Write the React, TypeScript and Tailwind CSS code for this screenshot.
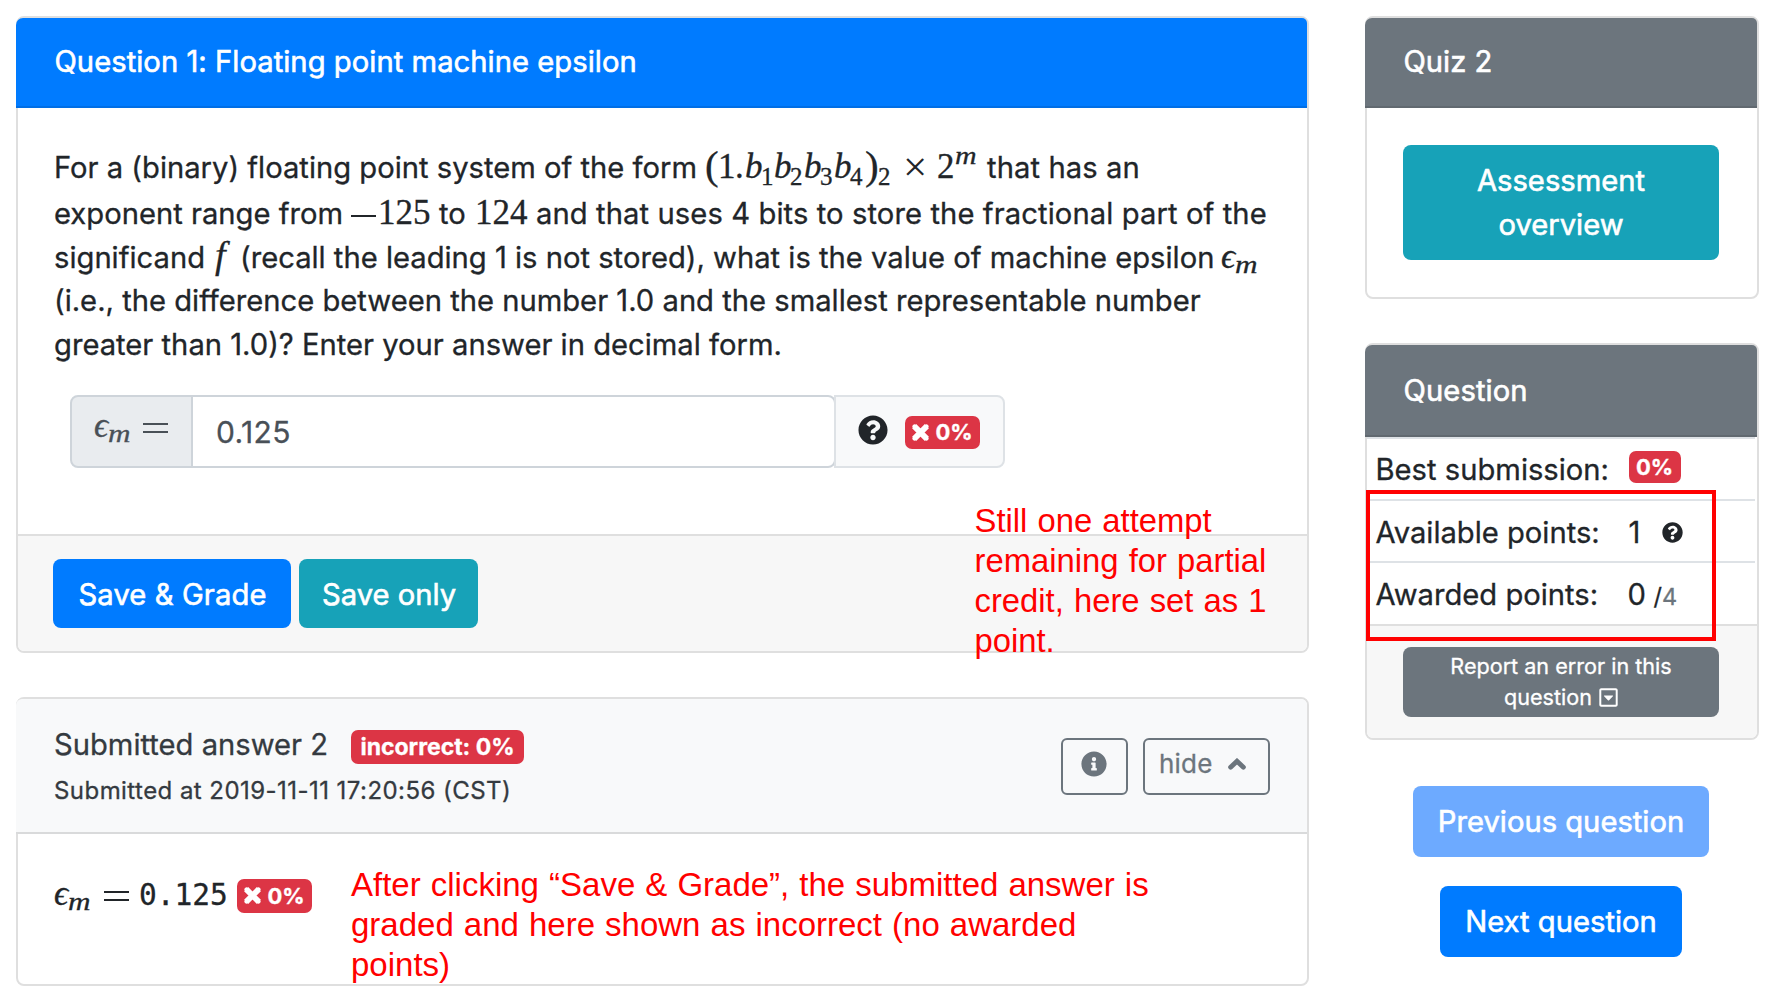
import type { ReactNode } from "react";
import { FaInfoCircle, FaQuestionCircle, FaRegCaretSquareDown } from "react-icons/fa";

const serif = "font-['Liberation_Serif',serif] leading-none";
const it = `${serif} italic text-[35px]`;
const num = `${serif} text-[35px]`;
const sub = `${serif} text-[25px] relative top-[6.5px]`;
const bold = "[-webkit-text-stroke:0.6px]";

function Cross() {
  return (
    <svg viewBox="0 0 16 16" className="h-[17px] w-[17px]" fill="none" stroke="currentColor">
      <path d="M2 2 14 14 M14 2 2 14" strokeWidth="5.4" />
      <path d="M2.4 2.4 13.6 13.6 M13.6 2.4 2.4 13.6" strokeWidth="4" strokeLinecap="round" />
    </svg>
  );
}

function ChevronUp() {
  return (
    <svg viewBox="0 0 18 12" className="ml-[15px] h-[12px] w-[18px]" fill="none" stroke="currentColor">
      <path d="M2.6 9.2 9 3.2 15.4 9.2" strokeWidth="4.8" strokeLinecap="round" />
    </svg>
  );
}

function Badge({ className, children }: { className: string; children: ReactNode }) {
  return (
    <span
      className={`inline-flex shrink-0 items-center justify-center rounded-[7px] bg-[#dc3545] text-[22px] leading-none font-bold text-white ${className}`}
    >
      {children}
    </span>
  );
}

function EpsilonM({ className = "" }: { className?: string }) {
  return (
    <span className={`inline-flex items-baseline ${className}`}>
      <span className={`w-[14px] ${it}`}>ϵ</span>
      <span className={`relative top-[5px] w-[22px] origin-left scale-x-[1.2] italic text-[26px] ${serif}`}>m</span>
    </span>
  );
}

function Equals({ className = "" }: { className?: string }) {
  return <span className={`inline-block h-[10px] w-[25px] border-y-2 border-current ${className}`} />;
}

function Formula() {
  return (
    <span className="flex w-[282px] items-baseline">
      <span className={`w-[13px] text-[41px] ${serif} relative top-[1px]`}>(</span>
      <span className={`w-[17px] ${num}`}>1</span>
      <span className={`w-[10px] ${num}`}>.</span>
      <span className={`w-[16px] ${it}`}>b</span>
      <span className={`w-[13px] ${sub}`}>1</span>
      <span className={`w-[16px] ${it}`}>b</span>
      <span className={`w-[14px] ${sub}`}>2</span>
      <span className={`w-[16px] ${it}`}>b</span>
      <span className={`w-[14px] ${sub}`}>3</span>
      <span className={`w-[16px] ${it}`}>b</span>
      <span className={`w-[15px] ${sub}`}>4</span>
      <span className={`w-[13px] text-[41px] ${serif} relative top-[1px]`}>)</span>
      <span className={`w-[25px] ${sub}`}>2</span>
      <span className={`relative top-[3px] w-[34px] text-[43px] ${serif} [-webkit-text-stroke:0px]`}>×</span>
      <span className={`w-[18px] ${num}`}>2</span>
      <span className={`relative -top-[14px] origin-left scale-x-[1.15] text-[26px] italic ${serif}`}>m</span>
    </span>
  );
}

function CardHeader({ className, children }: { className: string; children: ReactNode }) {
  return (
    <div
      className={`-ml-[2px] flex items-center rounded-tl-[7px] rounded-tr-[5px] border-b-2 border-black/10 pl-[38.5px] text-[29.2px] leading-[44px] text-white ${bold} ${className}`}
    >
      {children}
    </div>
  );
}

const row = "flex h-[43.8px] items-baseline whitespace-nowrap";

export default function App() {
  return (
    <div className="relative flex h-[1002px] w-[1768px] items-start overflow-hidden bg-white pt-4 pl-4 font-['Inter',sans-serif] text-[29.2px] leading-[43.8px] text-[#212529] [-webkit-text-stroke:0.3px]">
      <main className="flex w-[1293px] shrink-0 flex-col gap-[44px]">
        <section className="flex h-[637px] flex-col rounded-lg border-2 border-[#dfdfdf]">
          <CardHeader className="h-[90px] bg-[#007bff] pb-px tracking-[0.04px]">
            Question 1: Floating point machine epsilon
          </CardHeader>
          <div className="flex-1 pt-[34px] pl-[36px]">
            <div className="flex h-[49.8px] items-baseline whitespace-nowrap">
              <span className="w-[651px]">For a (binary) floating point system of the form</span>
              <Formula />
              <span className="tracking-[0.1px]">that has an</span>
            </div>
            <div className={row}>
              <span className="w-[297px]">exponent range from</span>
              <span className="mr-[2px] inline-block h-[9px] w-[25px] border-t-2 border-current" />
              <span className={`w-[61px] ${num}`}>125</span>
              <span className="w-[36px]">to</span>
              <span className={`w-[61px] ${num}`}>124</span>
              <span className="tracking-[0.09px]">and that uses 4 bits to store the fractional part of the</span>
            </div>
            <div className={row}>
              <span className="w-[161px]">significand</span>
              <span className={`w-[25px] text-[38px] italic ${serif}`}>f</span>
              <span className="w-[981px]">
                (recall the leading 1 is not stored), what is the value of machine epsilon
              </span>
              <EpsilonM />
            </div>
            <div className={row}>
              (i.e., the difference between the number 1.0 and the smallest representable number
            </div>
            <div className={row}>greater than 1.0)? Enter your answer in decimal form.</div>

            <div className="mt-[28px] ml-[16px] flex h-[73px] w-[935px] text-[#495057]">
              <div className="flex w-[123px] items-baseline rounded-l-lg border-2 border-[#ced4da] bg-[#e9ecef] pl-[22px]">
                <EpsilonM className="mt-[11px] w-[49px]" />
                <Equals className="relative -top-[4px]" />
              </div>
              <div className="-ml-[2px] flex w-[645px] items-center rounded-r-lg border-2 border-[#ced4da] pt-[2px] pl-[23px] text-[30px] tracking-[0.4px]">
                0.125
              </div>
              <div className="-ml-[2px] flex flex-1 items-center rounded-r-lg border-2 border-[#dee2e6] bg-[#f8f9fa] pl-[22px] text-[#212529]">
                <FaQuestionCircle className="mb-[3px] h-[30px] w-[30px]" />
                <Badge className="mt-[2px] ml-[17px] h-[33px] w-[75px] gap-[6px]">
                  <Cross />
                  0%
                </Badge>
              </div>
            </div>
          </div>
          <div
            className={`flex h-[117px] gap-[8px] rounded-b-md border-t-2 border-[#dfdfdf] bg-[#f7f7f7] pt-[23px] pl-[35px] text-white ${bold}`}
          >
            <button className="h-[69px] w-[238px] rounded-lg bg-[#007bff] pt-[2px] pl-px tracking-[0.1px]">
              Save &amp; Grade
            </button>
            <button className="h-[69px] w-[179px] rounded-lg bg-[#17a2b8] pt-[2px] pl-px">Save only</button>
          </div>
        </section>

        <section className="h-[289px] rounded-lg border-2 border-[#dfdfdf]">
          <div className="-ml-[2px] flex h-[135px] justify-between rounded-t-md border-b-2 border-[#d9dadb] bg-[#f8f9fa] pt-[24px] pr-[37px] pl-[38px] text-[#343a40]">
            <div>
              <div className="flex">
                <span className="w-[297px]">Submitted answer 2</span>
                <Badge className="mt-[7px] h-[34px] w-[173px] text-[23px]">incorrect: 0%</Badge>
              </div>
              <div className="mt-[4px] text-[24px] leading-[40px] tracking-[0.45px]">
                Submitted at 2019-11-11 17:20:56 (CST)
              </div>
            </div>
            <div className="mt-[15px] flex h-[57px] gap-[15px] text-[#6c757d]">
              <button className="flex w-[67px] items-center justify-center rounded-md border-2 border-[#6c757d] pr-px pb-[5px]">
                <FaInfoCircle className="h-[26px] w-[26px]" />
              </button>
              <button className="flex w-[127px] items-center rounded-md border-2 border-[#6c757d] pb-[5px] pl-[14px] text-[26px] tracking-[0.2px]">
                hide
                <ChevronUp />
              </button>
            </div>
          </div>
          <div className="flex items-baseline pt-[40px] pl-[36px]">
            <EpsilonM className="w-[50px]" />
            <Equals className="relative -top-[4px]" />
            <span className="ml-[10px] w-[98px] font-['DejaVu_Sans_Mono',monospace] text-[29.5px]">0.125</span>
            <Badge className="relative -top-px h-[34px] w-[75px] gap-[6px]">
              <Cross />
              0%
            </Badge>
          </div>
        </section>
      </main>

      <aside className="ml-[56px] flex w-[394px] shrink-0 flex-col">
        <section className="h-[283px] rounded-lg border-2 border-[#dfdfdf]">
          <CardHeader className="h-[90px] bg-[#6c757d] pb-px">Quiz 2</CardHeader>
          <button className={`mt-[37px] ml-[36px] h-[115px] w-[316px] rounded-lg bg-[#17a2b8] text-white ${bold}`}>
            Assessment
            <br />
            overview
          </button>
        </section>

        <section className="mt-[44px] h-[397px] rounded-lg border-2 border-[#dfdfdf]">
          <CardHeader className="h-[92px] bg-[#6c757d] pt-px tracking-[0.1px]">Question</CardHeader>
          <div className="mr-[2px] h-[187px] border-t-2 border-[#dee2e6]">
            <div className="flex h-[62px] items-center border-b-2 border-[#dee2e6] pt-px pl-[8.5px]">
              <span className="w-[253px]">Best submission:</span>
              <Badge className="mb-[6px] h-[32px] w-[52px]">0%</Badge>
            </div>
            <div className="flex h-[62px] items-center border-b-2 border-[#dee2e6] pt-[3px] pl-[8.5px]">
              <span className="w-[253px]">Available points:</span>
              <span className="w-[33px]">1</span>
              <FaQuestionCircle className="h-[21px] w-[21px]" />
            </div>
            <div className="flex h-[61px] items-baseline pt-[10px] pl-[8.5px]">
              <span className="w-[252px]">Awarded points:</span>
              <span className="w-[26px]">0</span>
              <span className="text-[23.5px]">
                /<span className="text-[#6c757d]">4</span>
              </span>
            </div>
          </div>
          <div className="h-[114px] rounded-b-md border-t-2 border-[#dfdfdf] bg-[#f7f7f7] pt-[21px] pl-[36px]">
            <button className="h-[70px] w-[316px] rounded-lg bg-[#6c757d] text-[21.6px] leading-[31px] text-white">
              Report an error in this
              <span className="flex items-center justify-center gap-[7px]">
                question
                <FaRegCaretSquareDown className="mb-px h-[21px] w-[19px]" />
              </span>
            </button>
          </div>
        </section>

        <div className={`mt-[46px] flex flex-col items-center gap-[29px] pr-[2px] text-[29.2px] text-white ${bold}`}>
          <button className="h-[71px] w-[296px] rounded-lg bg-[#6daaff]">Previous question</button>
          <button className="h-[71px] w-[242px] rounded-lg bg-[#007bff]">Next question</button>
        </div>
      </aside>

      <div className="absolute top-[490px] left-[1366px] h-[151px] w-[350px] border-4 border-[#ff0000]" />
      <p className="absolute top-[501px] left-[974.5px] font-['Liberation_Sans',sans-serif] text-[32.8px] leading-[40.1px] whitespace-nowrap text-[#ff0000] [word-spacing:1px] [-webkit-text-stroke:0px]">
        Still one attempt
        <br />
        remaining for partial
        <br />
        credit, here set as 1
        <br />
        point.
      </p>
      <p className="absolute top-[865px] left-[351px] font-['Liberation_Sans',sans-serif] text-[33px] leading-[40.1px] whitespace-nowrap text-[#ff0000] [word-spacing:0.9px] [-webkit-text-stroke:0px]">
        After clicking “Save &amp; Grade”, the submitted answer is
        <br />
        graded and here shown as incorrect (no awarded
        <br />
        points)
      </p>
    </div>
  );
}
